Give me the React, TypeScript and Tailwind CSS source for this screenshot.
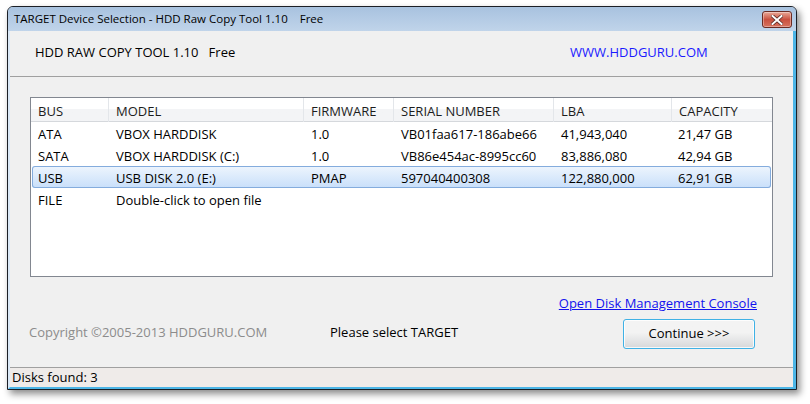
import React from 'react';

type Disk = {
	bus: string;
	model: string;
	firmware: string;
	serial: string;
	lba: string;
	capacity: string;
	selected?: boolean;
};

const disks: Disk[] = [
	{ bus: 'ATA', model: 'VBOX HARDDISK', firmware: '1.0', serial: 'VB01faa617-186abe66', lba: '41,943,040', capacity: '21,47 GB' },
	{ bus: 'SATA', model: 'VBOX HARDDISK (C:)', firmware: '1.0', serial: 'VB86e454ac-8995cc60', lba: '83,886,080', capacity: '42,94 GB' },
	{ bus: 'USB', model: 'USB DISK 2.0 (E:)', firmware: 'PMAP', serial: '597040400308', lba: '122,880,000', capacity: '62,91 GB', selected: true },
	{ bus: 'FILE', model: 'Double-click to open file', firmware: '', serial: '', lba: '', capacity: '' }
];

const headers = ['BUS', 'MODEL', 'FIRMWARE', 'SERIAL NUMBER', 'LBA', 'CAPACITY'];

const CloseButton = () => (
	<div className="w-[30px] h-[17px] rounded-[3px] border border-[#6b2b23] bg-gradient-to-b from-[#e8a898] via-[#c9503f] to-[#d7715d] flex items-center justify-center shadow-[inset_0_0_0_1px_rgba(255,255,255,0.35)]">
		<svg width="12" height="10" viewBox="0 0 12 10">
			<path d="M1.5 1 L10.5 9 M10.5 1 L1.5 9" stroke="#5a2a25" strokeWidth="3.6" strokeLinecap="square" />
			<path d="M1.5 1 L10.5 9 M10.5 1 L1.5 9" stroke="#ffffff" strokeWidth="2" strokeLinecap="square" />
		</svg>
	</div>
);

export default function App() {
	return (
		<div className="w-[810px] h-[404px] bg-white font-['Open_Sans',sans-serif] text-[13px] text-black overflow-hidden">
			<div className="ml-[7px] mt-[6px] w-[790px] h-[384px] flex flex-col border border-[#1b1f26] rounded-t-[6px] bg-[#c4d8ee] shadow-[3px_4px_7px_rgba(0,0,0,0.45)]">
				{/* title bar */}
				<div className="h-[24px] flex items-start rounded-t-[5px] bg-gradient-to-b from-[#a8c2df] to-[#c0d4ea]">
					<div className="pl-[6px] pt-[4px] leading-[16px] text-[11.5px] whitespace-pre">TARGET Device Selection - HDD Raw Copy Tool 1.10    Free</div>
					<div className="ml-auto mr-[4px] mt-[4px]">
						<CloseButton />
					</div>
				</div>

				{/* body */}
				<div className="flex-1 flex flex-col bg-[#f0f0f0] border-l-2 border-r-[3px] border-b-2 border-l-[#dbe9f7] border-r-[#4cb5e6] border-b-[#4cb5e6]">
					<div className="h-[46px] flex items-center border-b border-[#a0a0a0] pl-[25px] pb-[2px]">
						<span className="w-[535px] whitespace-pre">HDD RAW COPY TOOL 1.10   Free</span>
						<span className="text-[#1a1aff]">WWW.HDDGURU.COM</span>
					</div>

					<div className="pt-[20px] px-[20px]">
						<div className="h-[180px] border border-[#828790] bg-white">
							<div className="grid grid-cols-[78px_195px_90px_160px_118px_1fr] h-[24px] border-b border-[#d5d8dc] bg-gradient-to-b from-white from-50% to-[#f3f4f6] to-50% text-[#1c1c1c]">
								{headers.map((h, i) => (
									<div key={h} className={`pl-[7px] pt-[2px] leading-[22px] ${i < 5 ? 'border-r border-[#e3e6ea]' : ''}`}>
										{h}
									</div>
								))}
							</div>
							{disks.map((d) => (
								<div
									key={d.bus}
									className={`grid grid-cols-[77px_195px_90px_160px_118px_1fr] h-[22px] mx-px pt-[2px] leading-[21px] rounded-[3px] ${
										d.selected
											? 'bg-gradient-to-b from-[#eef5fd] to-[#c8dffa] shadow-[inset_0_0_0_1px_#84acdd]'
											: ''
									}`}
								>
									<div className="pl-[6px]">{d.bus}</div>
									<div className="pl-[7px] whitespace-nowrap">{d.model}</div>
									<div className="pl-[7px]">{d.firmware}</div>
									<div className="pl-[7px]">{d.serial}</div>
									<div className="pl-[7px]">{d.lba}</div>
									<div className="pl-[6px]">{d.capacity}</div>
								</div>
							))}
						</div>
					</div>

					<div className="h-[90px] flex flex-col">
						<div className="flex justify-end pr-[36px] pt-[18px]">
							<span className="text-[#1212ee] underline leading-[16px]">Open Disk Management Console</span>
						</div>
						<div className="flex items-start mt-[8px]">
							<div className="w-[320px] pl-[19px] text-[#8c8c8c] mt-[4px] whitespace-nowrap">Copyright ©2005-2013 HDDGURU.COM</div>
							<div className="mt-[4px]">Please select TARGET</div>
							<div className="ml-auto mr-[38px] w-[132px] h-[30px] rounded-[3px] border border-[#3fb1e5] bg-gradient-to-b from-[#f3f3f3] from-45% to-[#d6d8da] shadow-[inset_0_0_0_1px_rgba(255,255,255,0.8)] flex items-center justify-center">
								Continue &gt;&gt;&gt;
							</div>
						</div>
					</div>

					<div className="h-[20px] border-t border-[#a0a0a0] bg-[#efebe9] pl-[2px] leading-[19px]">Disks found: 3</div>
				</div>
			</div>
		</div>
	);
}
